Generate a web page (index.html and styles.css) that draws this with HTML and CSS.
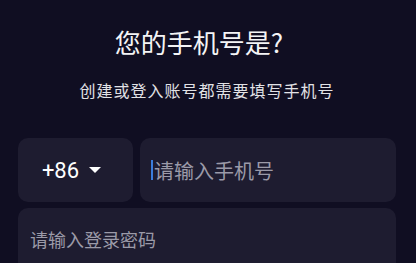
FILE: index.html
```html
<!DOCTYPE html>
<html lang="zh-CN">
<head>
<meta charset="utf-8">
<link rel="stylesheet" href="styles.css">
</head>
<body>
<main class="page">
  <h1 class="title">您的手机号是?</h1>
  <p class="subtitle">创建或登入账号都需要填写手机号</p>
  <div class="form">
    <div class="row">
      <div class="country">
        <span class="code">+86</span>
        <svg class="caret-down" width="12" height="7" viewBox="0 0 12 7"><path d="M0 0 H12 L6 6 Z" fill="#ffffff"/></svg>
      </div>
      <div class="field phone">
        <span class="cursor"></span><span class="placeholder">请输入手机号</span>
      </div>
    </div>
    <div class="field password">
      <span class="placeholder small">请输入登录密码</span>
    </div>
  </div>
</main>
</body>
</html>
```

FILE: styles.css
```css
html, body {
  margin: 0;
  padding: 0;
  background: #100e22;
  height: 100%;
  overflow: hidden;
}
body {
  font-family: "Noto Sans CJK SC", "Noto Sans", sans-serif;
  color: #ffffff;
}
.page {
  padding: 0 20px 0 18px;
}
.title {
  margin: 0;
  padding-top: 24px;
  padding-right: 16px;
  font-size: 26px;
  font-weight: 400;
  line-height: 36px;
  text-align: center;
  color: #f4f4f6;
}
.subtitle {
  margin: 0;
  padding-top: 19px;
  font-size: 16px;
  letter-spacing: 1px;
  line-height: 22px;
  text-align: center;
  color: #e2e2e6;
}
.form {
  margin-top: 37px;
  display: flex;
  flex-direction: column;
  gap: 6px;
}
.row {
  display: flex;
  gap: 7px;
}
.country {
  width: 115px;
  height: 64px;
  box-sizing: border-box;
  padding-right: 8px;
  background: #1e1c30;
  border-radius: 10px;
  display: flex;
  align-items: center;
  justify-content: center;
  gap: 10px;
}
.code {
  font-family: Roboto, "Noto Sans", sans-serif;
  font-size: 22px;
  color: #ffffff;
}
.caret-down {
  display: block;
  margin-top: 1px;
}
.field {
  background: #1e1c30;
  border-radius: 10px;
  display: flex;
  align-items: center;
}
.phone {
  flex: 1;
  height: 64px;
  padding-left: 11px;
}
.password {
  height: 70px;
  padding-left: 12px;
  align-items: flex-start;
  padding-top: 18px;
  box-sizing: border-box;
}
.cursor {
  width: 2px;
  height: 20px;
  background: #3b7ddd;
  margin-right: 1px;
}
.placeholder {
  font-size: 20px;
  color: #9b9aa8;
}
.placeholder.small {
  font-size: 18px;
}
```
